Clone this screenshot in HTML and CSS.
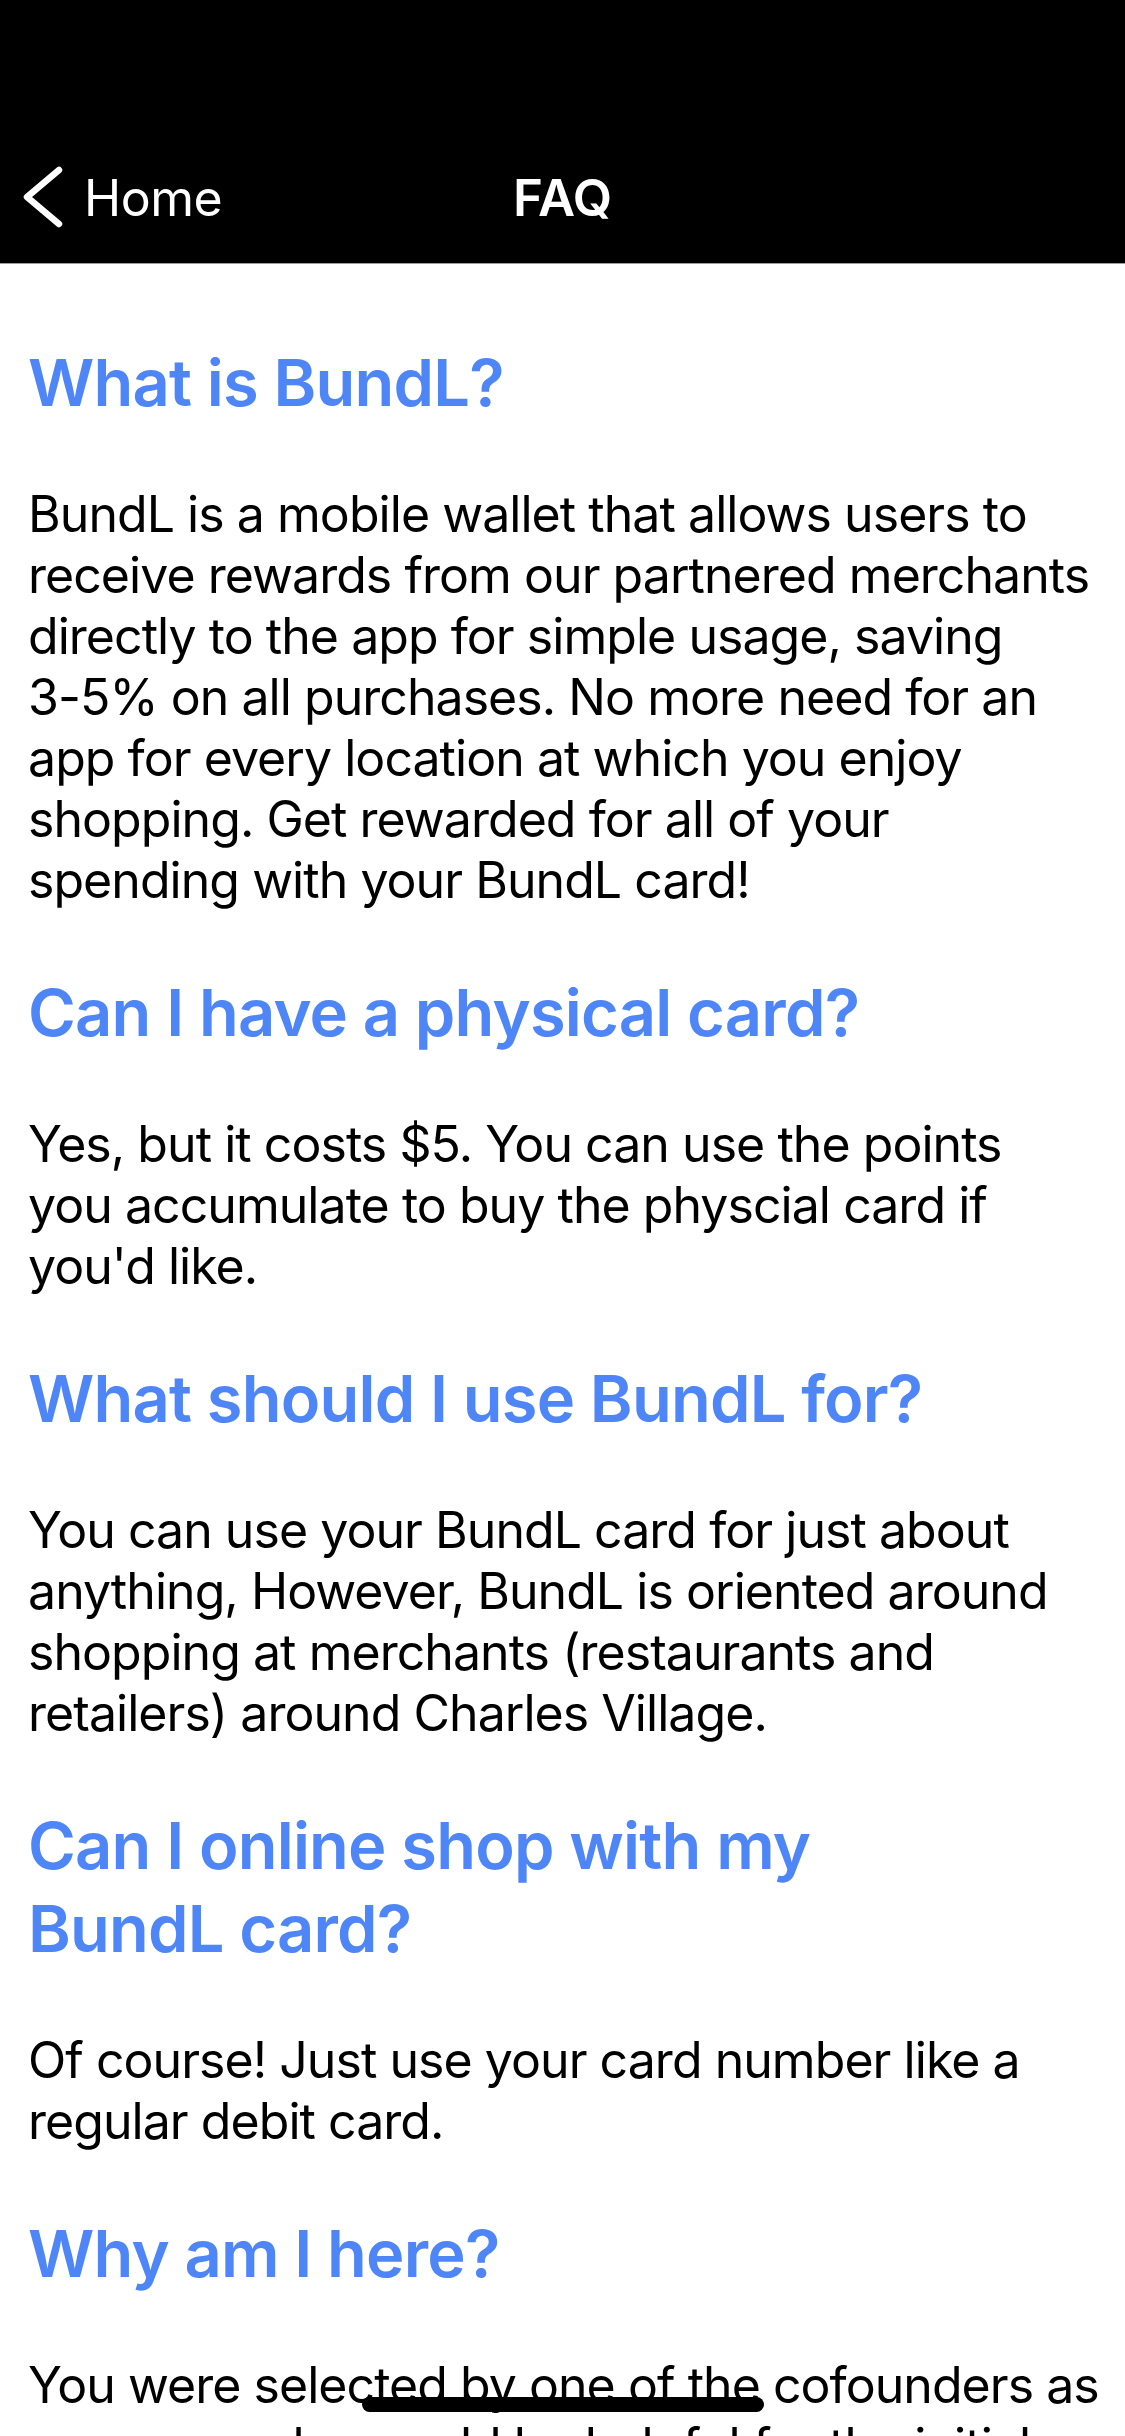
FILE: index.html
```html
<!DOCTYPE html>
<html lang="en">
<head>
<meta charset="utf-8">
<title>FAQ</title>
<link rel="stylesheet" href="styles.css">
</head>
<body>
<div class="screen">
  <header class="topbar">
    <div class="status"></div>
    <nav class="navbar">
      <a class="back">
        <svg class="chev" width="40" height="62" viewBox="0 0 40 62"><polyline points="36,4 4,31 36,58" fill="none" stroke="#fff" stroke-width="6.5" stroke-linecap="round" stroke-linejoin="round"/></svg>
        <span class="back-label">Home</span>
      </a>
      <h1 class="title">FAQ</h1>
      <span class="spacer"></span>
    </nav>
  </header>
  <main class="faq">
    <h2 class="q">What is BundL?</h2>
    <p class="a">BundL is a mobile wallet that allows users to<br>receive rewards from our partnered merchants<br>directly to the app for simple usage, saving<br>3-5% on all purchases. No more need for an<br>app for every location at which you enjoy<br>shopping. Get rewarded for all of your<br>spending with your BundL card!</p>
    <h2 class="q">Can I have a physical card?</h2>
    <p class="a">Yes, but it costs $5. You can use the points<br>you accumulate to buy the physcial card if<br>you'd like.</p>
    <h2 class="q">What should I use BundL for?</h2>
    <p class="a">You can use your BundL card for just about<br>anything, However, BundL is oriented around<br>shopping at merchants (restaurants and<br>retailers) around Charles Village.</p>
    <h2 class="q">Can I online shop with my<br>BundL card?</h2>
    <p class="a">Of course! Just use your card number like a<br>regular debit card.</p>
    <h2 class="q">Why am I here?</h2>
    <p class="a">You were selected by one of the cofounders as<br>someone who would be helpful for the initial<br>launch of the BundL card.</p>
  </main>
  <div class="home-indicator"></div>
</div>
</body>
</html>
```
FILE: styles.css
```css
* { box-sizing: border-box; }
html, body { margin: 0; padding: 0; background: #fff; }
body { font-family: Inter, "Liberation Sans", sans-serif; color: #000; }
.screen { width: 1125px; height: 2436px; overflow: hidden; position: relative; background: #fff; }
.topbar { background: #000; border-bottom: 1px solid #9c9c9c; }
.status { height: 132px; }
.navbar { height: 131px; display: grid; grid-template-columns: 1fr auto 1fr; align-items: center; }
.back { display: flex; align-items: center; gap: 21px; padding-left: 23px; color: #fff; text-decoration: none; }
.chev { display: block; margin-top: -2px; }
.back-label { font-size: 50px; font-weight: 400; letter-spacing: -0.5px; line-height: 1; }
.title { margin: 0; color: #fff; font-size: 51px; font-weight: 600; line-height: 1; letter-spacing: -0.3px; }
.faq { display: flex; flex-direction: column; gap: 60px; padding: 77px 20px 0 28px; }
.q { margin: 0; color: #4f86f7; font-size: 65px; font-weight: 600; line-height: 83px; letter-spacing: -0.8px; white-space: nowrap; }
.a { margin: 0; font-size: 50px; font-weight: 400; line-height: 61px; letter-spacing: -0.95px; white-space: nowrap; }
.home-indicator { position: absolute; left: 50%; bottom: 24px; width: 402px; height: 15px; margin-left: -201px; background: #000; border-radius: 8px; }
```
